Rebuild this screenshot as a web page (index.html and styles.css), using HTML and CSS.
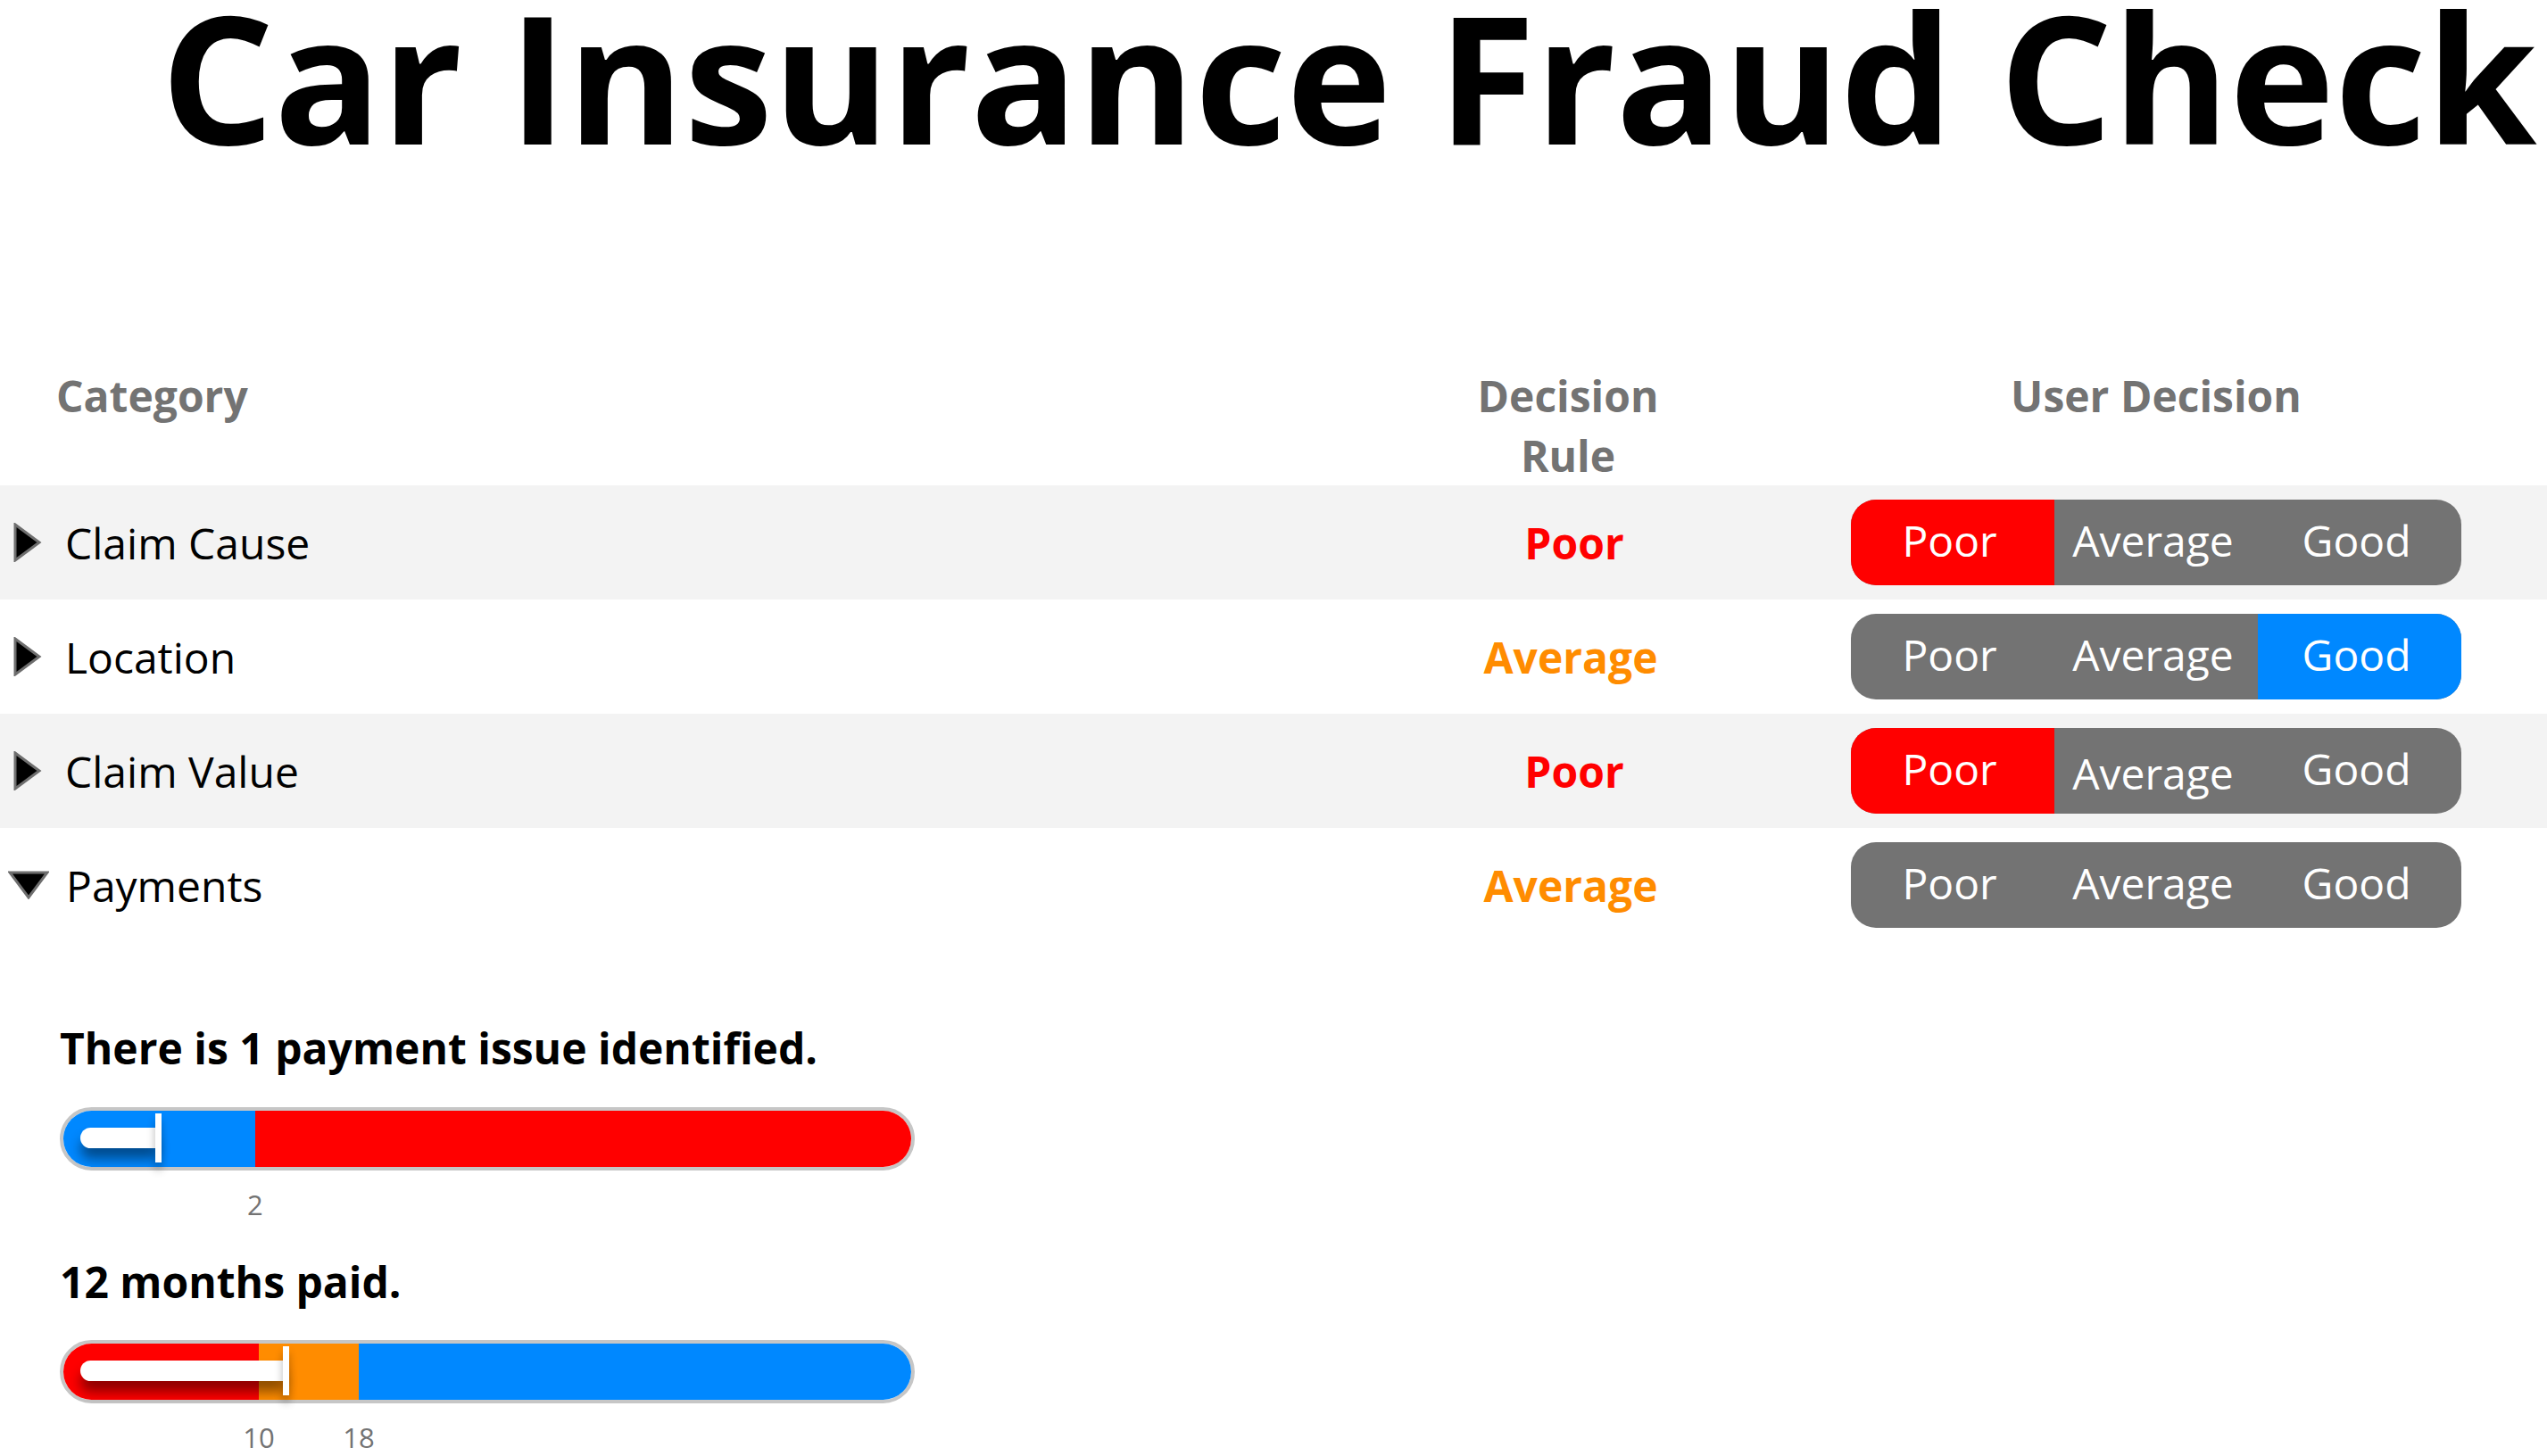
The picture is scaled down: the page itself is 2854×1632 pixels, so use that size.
FILE: index.html
```html
<!DOCTYPE html>
<html lang="en">
<head>
    <meta charset="UTF-8">
    <meta name="viewport" content="width=device-width, initial-scale=1.0">
    <title>Car Insurance Fraud Check</title>
    <link rel="stylesheet" href="styles.css">
</head>
<body>
    <h1 class="title">Car Insurance Fraud Check</h1>

    <div class="table">
        <div class="row head">
            <div class="cell cat">Category</div>
            <div class="cell rule">Decision Rule</div>
            <div class="cell user">User Decision</div>
        </div>

        <div class="row shaded">
            <div class="cell cat">
                <svg class="caret" width="32" height="44" viewBox="0 0 32 44"><polygon points="2,2 29,22 2,42" /></svg>
                <span>Claim Cause</span>
            </div>
            <div class="cell rule poor">Poor</div>
            <div class="cell user">
                <div class="seg">
                    <span class="opt poor-on">Poor</span>
                    <span class="opt">Average</span>
                    <span class="opt">Good</span>
                </div>
            </div>
        </div>

        <div class="row">
            <div class="cell cat">
                <svg class="caret" width="32" height="44" viewBox="0 0 32 44"><polygon points="2,2 29,22 2,42" /></svg>
                <span>Location</span>
            </div>
            <div class="cell rule average">Average</div>
            <div class="cell user">
                <div class="seg">
                    <span class="opt">Poor</span>
                    <span class="opt">Average</span>
                    <span class="opt good-on">Good</span>
                </div>
            </div>
        </div>

        <div class="row shaded">
            <div class="cell cat">
                <svg class="caret" width="32" height="44" viewBox="0 0 32 44"><polygon points="2,2 29,22 2,42" /></svg>
                <span>Claim Value</span>
            </div>
            <div class="cell rule poor">Poor</div>
            <div class="cell user">
                <div class="seg">
                    <span class="opt poor-on">Poor</span>
                    <span class="opt low">Average</span>
                    <span class="opt">Good</span>
                </div>
            </div>
        </div>

        <div class="row">
            <div class="cell cat">
                <svg class="caret down" width="46" height="32" viewBox="0 0 46 32"><polygon points="2,2 44,2 23,30" /></svg>
                <span>Payments</span>
            </div>
            <div class="cell rule average">Average</div>
            <div class="cell user">
                <div class="seg">
                    <span class="opt">Poor</span>
                    <span class="opt">Average</span>
                    <span class="opt">Good</span>
                </div>
            </div>
        </div>
    </div>

    <div class="details">
        <p class="note">There is 1 payment issue identified.</p>
        <div class="slider">
            <div class="track">
                <div class="bands">
                    <div class="band blue" style="width: 22.63%"></div>
                    <div class="band red grow"></div>
                </div>
                <div class="fill" style="width: 11.58%"></div>
            </div>
            <div class="ticks">
                <span style="left: 22.63%">2</span>
            </div>
        </div>

        <p class="note">12 months paid.</p>
        <div class="slider">
            <div class="track">
                <div class="bands">
                    <div class="band red" style="width: 23.05%"></div>
                    <div class="band orange" style="width: 11.79%"></div>
                    <div class="band blue grow"></div>
                </div>
                <div class="fill" style="width: 26.63%"></div>
            </div>
            <div class="ticks">
                <span style="left: 23.05%">10</span>
                <span style="left: 34.84%">18</span>
            </div>
        </div>
    </div>
</body>
</html>
```

FILE: styles.css
```css
body {
    font-family: "Open Sans", "Liberation Sans", sans-serif;
    background-color: #FFFFFF;
    color: #000000;
    margin: 0;
    padding: 0;
}

.title {
    font-size: 200px;
    font-weight: bold;
    line-height: 170px;
    letter-spacing: -0.35px;
    margin: 0;
    padding-left: 180px;
    white-space: nowrap;
}

.table {
    margin-top: 240px;
}

.row {
    display: grid;
    grid-template-columns: 1fr 280px 740px;
    column-gap: 146px;
    padding-right: 68px;
    height: 128px;
    align-items: center;
    font-size: 48px;
    line-height: 1.4;
}

.row.head {
    height: auto;
    align-items: start;
    font-weight: bold;
    color: #737373;
}

.row.shaded {
    background-color: #F3F3F3;
}

.head .cat {
    padding-left: 63px;
}

.head .rule {
    padding-right: 6px;
}

.cell.rule,
.cell.user {
    text-align: center;
}

.cell.cat {
    display: flex;
    align-items: center;
}

.caret {
    margin-left: 15px;
    margin-right: 26px;
    flex-shrink: 0;
}

.caret polygon {
    fill: #000000;
    stroke: #6E6E6E;
    stroke-width: 3;
}

.caret.down {
    margin-left: 9px;
    margin-right: 19px;
}

.poor {
    color: #FF0000;
    font-weight: bold;
}

.average {
    color: #FF8C00;
    font-weight: bold;
}

.cell.rule.poor {
    padding-left: 8px;
}

.cell.user {
    display: flex;
    justify-content: center;
}

.seg {
    display: flex;
    width: 684px;
    height: 96px;
    background-color: #737373;
    border-radius: 28px;
    overflow: hidden;
}

.opt {
    flex: 1;
    display: flex;
    align-items: center;
    justify-content: center;
    padding: 0 7px 5px 0;
    color: #FFFFFF;
}

.opt.poor-on {
    background-color: #FF0000;
}

.opt.good-on {
    background-color: #0088FF;
}

.opt.low {
    padding-bottom: 0;
    padding-top: 4px;
}

.details {
    padding: 85px 0 0 67px;
}

.note {
    font-size: 48px;
    font-weight: bold;
    line-height: 1.4;
    margin: 0 0 32px 0;
}

.slider {
    width: 958px;
    margin-bottom: 31px;
}

.track {
    position: relative;
    height: 63px;
    border: 4px solid #C6C6C6;
    border-radius: 36px;
}

.bands {
    display: flex;
    height: 100%;
    border-radius: 32px;
    overflow: hidden;
}

.band.grow {
    flex: 1;
}

.blue {
    background-color: #0088FF;
}

.red {
    background-color: #FF0000;
}

.orange {
    background-color: #FF8C00;
}

.fill {
    position: absolute;
    left: 0;
    top: 19px;
    height: 23px;
}

.fill::before {
    content: "";
    position: absolute;
    left: 19px;
    right: 5px;
    top: 0;
    bottom: 0;
    background: #FFFFFF;
    border-radius: 12px 0 0 12px;
    box-shadow: 0 12px 14px rgba(0, 0, 0, 0.45);
}

.fill::after {
    content: "";
    position: absolute;
    right: 0;
    top: -16px;
    width: 7px;
    height: 55px;
    background: #FFFFFF;
    box-shadow: 0 8px 10px rgba(0, 0, 0, 0.3);
}

.ticks {
    position: relative;
    height: 43px;
    margin: 17px 4px 0 4px;
    font-size: 31px;
    line-height: 43px;
    color: #737373;
}

.ticks span {
    position: absolute;
    top: 0;
    transform: translateX(-50%);
}
```
